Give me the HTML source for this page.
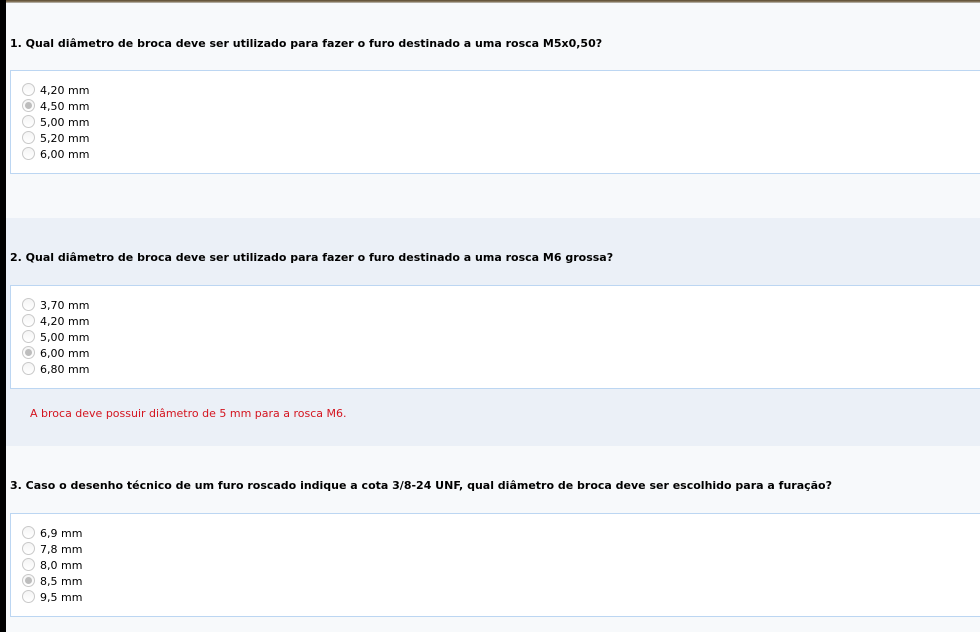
<!DOCTYPE html>
<html><head><meta charset="utf-8"><style>
*{margin:0;padding:0;box-sizing:border-box}
body{width:980px;height:632px;overflow:hidden;background:#f7f9fb;font-family:"DejaVu Sans","Liberation Sans",sans-serif;font-size:11px;color:#000;position:relative}
.left{position:absolute;left:0;top:0;width:6px;height:632px;background:#000}
.top{position:absolute;left:6px;top:0;right:0;height:3px;background:linear-gradient(#5a4a30,#8a7a60 60%,#c8c8c8)}
.sec{position:absolute;left:6px;right:0}
.q{position:absolute;left:4px;font-weight:bold;font-size:11px;white-space:nowrap}
.box{position:absolute;left:4px;right:-2px;height:104px;background:#fff;border:1px solid #bcd6f2;border-right:none}
.opt{position:absolute;left:11px;height:16px;display:flex;align-items:center}
.r{width:13px;height:13px;border-radius:50%;border:1px solid #c9c9c9;background:linear-gradient(#f4f4f4,#fff);margin-right:5px;position:relative;top:-1px}
.r.c::after{content:"";position:absolute;left:2px;top:2px;width:7px;height:7px;border-radius:50%;background:#bdbdbd}
.fb{position:absolute;left:24px;color:#d4141f;font-size:11px}
</style></head><body>
<div class="left"></div><div class="top"></div>
<div class="sec" style="top:3px;height:215px;background:#f7f9fb">
 <div class="q" style="top:34px">1. Qual diâmetro de broca deve ser utilizado para fazer o furo destinado a uma rosca M5x0,50?</div>
 <div class="box" style="top:67px">
  <div class="opt" style="top:11px"><span class="r"></span>4,20 mm</div>
  <div class="opt" style="top:27px"><span class="r c"></span>4,50 mm</div>
  <div class="opt" style="top:43px"><span class="r"></span>5,00 mm</div>
  <div class="opt" style="top:59px"><span class="r"></span>5,20 mm</div>
  <div class="opt" style="top:75px"><span class="r"></span>6,00 mm</div>
 </div>
</div>
<div class="sec" style="top:218px;height:228px;background:#ebf0f7">
 <div class="q" style="top:33px">2. Qual diâmetro de broca deve ser utilizado para fazer o furo destinado a uma rosca M6 grossa?</div>
 <div class="box" style="top:67px">
  <div class="opt" style="top:11px"><span class="r"></span>3,70 mm</div>
  <div class="opt" style="top:27px"><span class="r"></span>4,20 mm</div>
  <div class="opt" style="top:43px"><span class="r"></span>5,00 mm</div>
  <div class="opt" style="top:59px"><span class="r c"></span>6,00 mm</div>
  <div class="opt" style="top:75px"><span class="r"></span>6,80 mm</div>
 </div>
 <div class="fb" style="top:189px">A broca deve possuir diâmetro de 5 mm para a rosca M6.</div>
</div>
<div class="sec" style="top:446px;height:186px;background:#f7f9fb">
 <div class="q" style="top:33px">3. Caso o desenho técnico de um furo roscado indique a cota 3/8-24 UNF, qual diâmetro de broca deve ser escolhido para a furação?</div>
 <div class="box" style="top:67px">
  <div class="opt" style="top:11px"><span class="r"></span>6,9 mm</div>
  <div class="opt" style="top:27px"><span class="r"></span>7,8 mm</div>
  <div class="opt" style="top:43px"><span class="r"></span>8,0 mm</div>
  <div class="opt" style="top:59px"><span class="r c"></span>8,5 mm</div>
  <div class="opt" style="top:75px"><span class="r"></span>9,5 mm</div>
 </div>
</div>
</body></html>
